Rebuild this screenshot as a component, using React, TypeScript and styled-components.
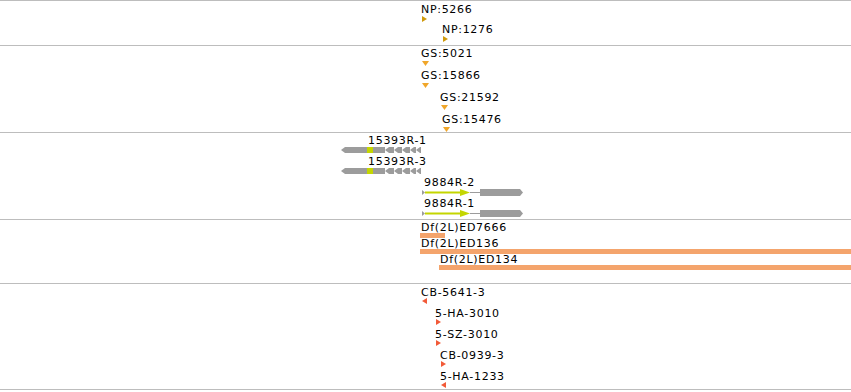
import styled, { createGlobalStyle } from 'styled-components';

const GlobalStyle = createGlobalStyle`
  html, body {
    margin: 0;
    padding: 0;
    background: #ffffff;
  }
  body {
    font-family: 'DejaVu Sans', 'Liberation Sans', sans-serif;
  }
`;

const LINE = '#bdbdbd';
const GREY = '#9c9c9c';
const LIME = '#c4d600';

type Shape = 'right' | 'left' | 'down' | 'bar' | 'geneRev' | 'geneFwd';

interface Feature {
  name: string;
  lx: number;
  gx: number;
  shape: Shape;
  width?: number;
}

interface TrackData {
  id: string;
  height: number;
  pad: number;
  pitch: number;
  labelTop: number;
  gap: number;
  color: string;
  features: Feature[];
}

// height includes the 1px rule under each track
const tracks: TrackData[] = [
  {
    id: 'np',
    height: 45,
    pad: 1,
    pitch: 20,
    labelTop: 2,
    gap: 0,
    color: '#cf9a0c',
    features: [
      { name: 'NP:5266', lx: 421, gx: 422, shape: 'right' },
      { name: 'NP:1276', lx: 442, gx: 443, shape: 'right' },
    ],
  },
  {
    id: 'gs',
    height: 87,
    pad: 0,
    pitch: 22,
    labelTop: 2,
    gap: 1,
    color: '#f0a62a',
    features: [
      { name: 'GS:5021', lx: 421, gx: 422, shape: 'down' },
      { name: 'GS:15866', lx: 421, gx: 422, shape: 'down' },
      { name: 'GS:21592', lx: 440, gx: 441, shape: 'down' },
      { name: 'GS:15476', lx: 442, gx: 443, shape: 'down' },
    ],
  },
  {
    id: 'genes',
    height: 87,
    pad: 1,
    pitch: 21,
    labelTop: 1,
    gap: 0,
    color: GREY,
    features: [
      { name: '15393R-1', lx: 368, gx: 341, shape: 'geneRev' },
      { name: '15393R-3', lx: 368, gx: 341, shape: 'geneRev' },
      { name: '9884R-2', lx: 424, gx: 422, shape: 'geneFwd' },
      { name: '9884R-1', lx: 424, gx: 422, shape: 'geneFwd' },
    ],
  },
  {
    id: 'df',
    height: 64,
    pad: 1,
    pitch: 16,
    labelTop: 1,
    gap: -1,
    color: '#f4a46c',
    features: [
      { name: 'Df(2L)ED7666', lx: 421, gx: 420, shape: 'bar', width: 25 },
      { name: 'Df(2L)ED136', lx: 421, gx: 420, shape: 'bar' },
      { name: 'Df(2L)ED134', lx: 440, gx: 439, shape: 'bar' },
    ],
  },
  {
    id: 'cb',
    height: 106,
    pad: 1,
    pitch: 21,
    labelTop: 2,
    gap: -1,
    color: '#f25a38',
    features: [
      { name: 'CB-5641-3', lx: 421, gx: 422, shape: 'left' },
      { name: '5-HA-3010', lx: 435, gx: 436, shape: 'right' },
      { name: '5-SZ-3010', lx: 435, gx: 436, shape: 'right' },
      { name: 'CB-0939-3', lx: 440, gx: 441, shape: 'right' },
      { name: '5-HA-1233', lx: 440, gx: 441, shape: 'left' },
    ],
  },
];

const Panel = styled.div`
  width: 851px;
  border-top: 1px solid ${LINE};
`;

const Track = styled.section<{ $height: number; $pad: number }>`
  box-sizing: border-box;
  height: ${(p) => p.$height}px;
  padding-top: ${(p) => p.$pad}px;
  border-bottom: 1px solid ${LINE};
  overflow: hidden;
`;

const Row = styled.div<{ $pitch: number }>`
  display: flex;
  flex-direction: column;
  height: ${(p) => p.$pitch}px;
`;

const Label = styled.span<{ $x: number; $top: number }>`
  display: block;
  margin: ${(p) => p.$top}px 0 0 ${(p) => p.$x}px;
  font-size: 11px;
  line-height: 12px;
  letter-spacing: 0.7px;
  color: #000;
  white-space: nowrap;
`;

const GlyphSlot = styled.div<{ $x: number; $gap: number }>`
  display: flex;
  margin-left: ${(p) => p.$x}px;
  margin-top: ${(p) => p.$gap}px;
`;

const Bar = styled.div<{ $color: string; $width?: number }>`
  height: 5px;
  flex: ${(p) => (p.$width ? `0 0 ${p.$width}px` : '1 1 auto')};
  background: ${(p) => p.$color};
`;

const Arrow: React.FC<{ dir: 'right' | 'left' | 'down'; color: string }> = ({ dir, color }) => {
  if (dir === 'down') {
    return (
      <svg width="7" height="5" viewBox="0 0 7 5">
        <polygon points="0,0 7,0 3.5,5" fill={color} />
      </svg>
    );
  }
  return (
    <svg width="5" height="6" viewBox="0 0 5 6">
      <polygon points={dir === 'right' ? '0,0 5,3 0,6' : '5,0 0,3 5,6'} fill={color} />
    </svg>
  );
};

const GeneReverse = () => (
  <svg width="80" height="6" viewBox="0 0 80 6">
    <polygon points="0,3 4,0 44,0 44,6 4,6" fill={GREY} />
    <rect x="26" y="0" width="6" height="6" fill={LIME} />
    {[
      [44, 9],
      [53, 8],
      [61, 8],
      [69, 6],
      [75, 5],
    ].map(([a, w]) => (
      <polygon
        key={a}
        points={`${a},3 ${a + 4},0 ${a + w},0 ${a + w},6 ${a + 4},6`}
        fill={GREY}
      />
    ))}
  </svg>
);

const GeneForward = () => (
  <svg width="102" height="7" viewBox="0 0 102 7">
    <polygon points="0,1 3,3.5 0,6" fill={GREY} />
    <rect x="3" y="2.5" width="37" height="2" fill={LIME} />
    <polygon points="38,0 48,3.5 38,7" fill={LIME} />
    <rect x="48" y="3" width="10" height="1" fill={GREY} />
    <polygon points="58,0 98,0 101,3.5 98,7 58,7" fill={GREY} />
  </svg>
);

const Glyph: React.FC<{ feature: Feature; color: string }> = ({ feature, color }) => {
  switch (feature.shape) {
    case 'bar':
      return <Bar $color={color} $width={feature.width} />;
    case 'geneRev':
      return <GeneReverse />;
    case 'geneFwd':
      return <GeneForward />;
    default:
      return <Arrow dir={feature.shape} color={color} />;
  }
};

export default function App() {
  return (
    <>
      <GlobalStyle />
      <Panel>
        {tracks.map((t) => (
          <Track key={t.id} $height={t.height} $pad={t.pad}>
            {t.features.map((f) => (
              <Row key={f.name} $pitch={t.pitch}>
                <Label $x={f.lx} $top={t.labelTop}>
                  {f.name}
                </Label>
                <GlyphSlot $x={f.gx} $gap={t.gap}>
                  <Glyph feature={f} color={t.color} />
                </GlyphSlot>
              </Row>
            ))}
          </Track>
        ))}
      </Panel>
    </>
  );
}
